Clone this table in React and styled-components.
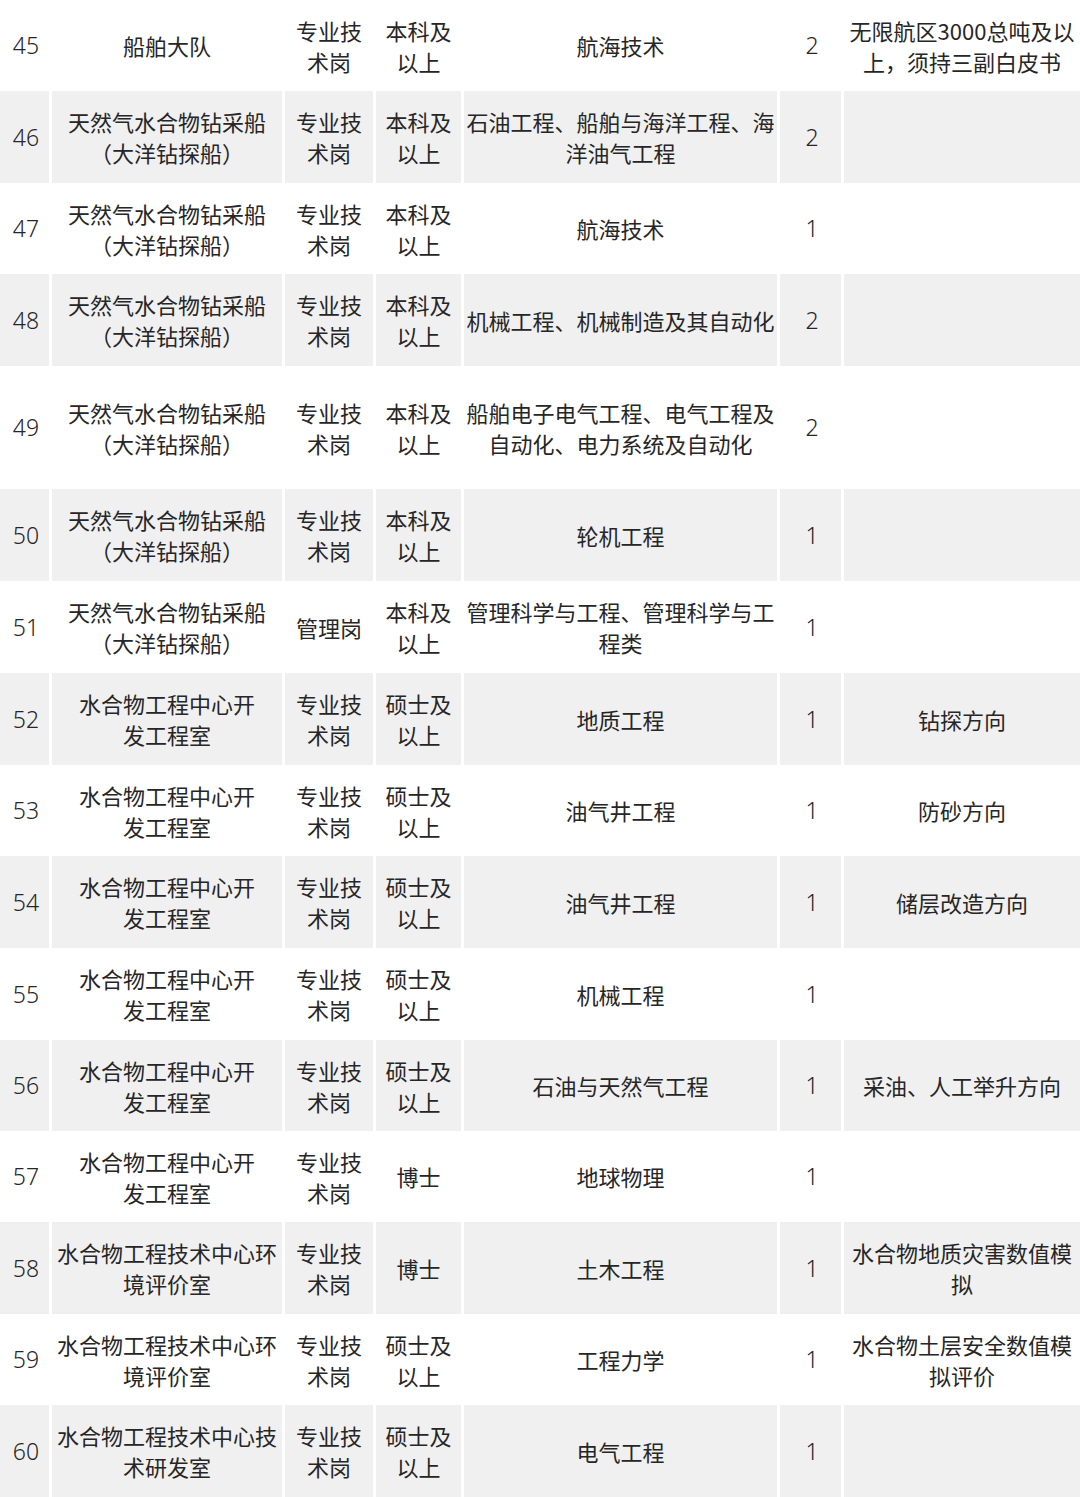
import React from "react";
import styled, { createGlobalStyle } from "styled-components";

const GlobalStyle = createGlobalStyle`
  html, body {
    margin: 0;
    padding: 0;
    background: #ffffff;
  }
  body {
    font-family: "Noto Sans CJK SC", "Noto Sans", sans-serif;
    color: #262626;
  }
`;

const rows = [
  { no: "45", unit: "船舶大队", post: "专业技\n术岗", edu: "本科及\n以上", major: "航海技术", count: "2", note: "无限航区3000总吨及以\n上，须持三副白皮书", h: 91 },
  { no: "46", unit: "天然气水合物钻采船\n（大洋钻探船）", post: "专业技\n术岗", edu: "本科及\n以上", major: "石油工程、船舶与海洋工程、海\n洋油气工程", count: "2", note: "", h: 92 },
  { no: "47", unit: "天然气水合物钻采船\n（大洋钻探船）", post: "专业技\n术岗", edu: "本科及\n以上", major: "航海技术", count: "1", note: "", h: 91 },
  { no: "48", unit: "天然气水合物钻采船\n（大洋钻探船）", post: "专业技\n术岗", edu: "本科及\n以上", major: "机械工程、机械制造及其自动化", count: "2", note: "", h: 92 },
  { no: "49", unit: "天然气水合物钻采船\n（大洋钻探船）", post: "专业技\n术岗", edu: "本科及\n以上", major: "船舶电子电气工程、电气工程及\n自动化、电力系统及自动化", count: "2", note: "", h: 123 },
  { no: "50", unit: "天然气水合物钻采船\n（大洋钻探船）", post: "专业技\n术岗", edu: "本科及\n以上", major: "轮机工程", count: "1", note: "", h: 92 },
  { no: "51", unit: "天然气水合物钻采船\n（大洋钻探船）", post: "管理岗", edu: "本科及\n以上", major: "管理科学与工程、管理科学与工\n程类", count: "1", note: "", h: 92 },
  { no: "52", unit: "水合物工程中心开\n发工程室", post: "专业技\n术岗", edu: "硕士及\n以上", major: "地质工程", count: "1", note: "钻探方向", h: 92 },
  { no: "53", unit: "水合物工程中心开\n发工程室", post: "专业技\n术岗", edu: "硕士及\n以上", major: "油气井工程", count: "1", note: "防砂方向", h: 91 },
  { no: "54", unit: "水合物工程中心开\n发工程室", post: "专业技\n术岗", edu: "硕士及\n以上", major: "油气井工程", count: "1", note: "储层改造方向", h: 92 },
  { no: "55", unit: "水合物工程中心开\n发工程室", post: "专业技\n术岗", edu: "硕士及\n以上", major: "机械工程", count: "1", note: "", h: 92 },
  { no: "56", unit: "水合物工程中心开\n发工程室", post: "专业技\n术岗", edu: "硕士及\n以上", major: "石油与天然气工程", count: "1", note: "采油、人工举升方向", h: 91 },
  { no: "57", unit: "水合物工程中心开\n发工程室", post: "专业技\n术岗", edu: "博士", major: "地球物理", count: "1", note: "", h: 91 },
  { no: "58", unit: "水合物工程技术中心环\n境评价室", post: "专业技\n术岗", edu: "博士", major: "土木工程", count: "1", note: "水合物地质灾害数值模\n拟", h: 92 },
  { no: "59", unit: "水合物工程技术中心环\n境评价室", post: "专业技\n术岗", edu: "硕士及\n以上", major: "工程力学", count: "1", note: "水合物土层安全数值模\n拟评价", h: 91 },
  { no: "60", unit: "水合物工程技术中心技\n术研发室", post: "专业技\n术岗", edu: "硕士及\n以上", major: "电气工程", count: "1", note: "", h: 92 },
];

const Table = styled.div`
  width: 1080px;
  display: flex;
  flex-direction: column;
`;

const Row = styled.div`
  display: grid;
  grid-template-columns: 49px 230px 88px 85px 313px 61px 236px;
  column-gap: 3px;
  height: ${(p) => p.$h}px;
  background: #ffffff;
`;

const Cell = styled.div`
  display: flex;
  align-items: center;
  justify-content: center;
  text-align: center;
  white-space: pre-line;
  font-size: 22px;
  line-height: 31px;
  font-weight: 400;
  color: #262626;
  background: ${(p) => (p.$shaded ? "#f0f0f0" : "#ffffff")};
  overflow: hidden;
`;

const Num = styled(Cell)`
  font-family: "Noto Sans", "Noto Sans CJK SC", sans-serif;
  font-weight: 300;
  font-size: 23px;
  padding-left: 3px;
`;

export default function App() {
  return (
    <>
      <GlobalStyle />
      <Table>
        {rows.map((r, i) => {
          const shaded = i % 2 === 1;
          return (
            <Row key={r.no} $h={r.h}>
              <Num $shaded={shaded}>{r.no}</Num>
              <Cell $shaded={shaded}>{r.unit}</Cell>
              <Cell $shaded={shaded}>{r.post}</Cell>
              <Cell $shaded={shaded}>{r.edu}</Cell>
              <Cell $shaded={shaded}>{r.major}</Cell>
              <Num $shaded={shaded}>{r.count}</Num>
              <Cell $shaded={shaded}>{r.note}</Cell>
            </Row>
          );
        })}
      </Table>
    </>
  );
}
